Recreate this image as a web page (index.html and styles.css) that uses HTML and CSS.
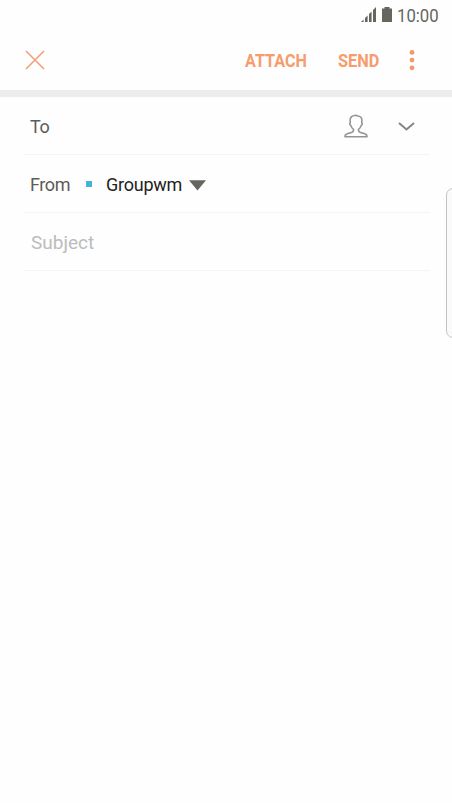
FILE: index.html
```html
<!DOCTYPE html>
<html lang="en">
<head>
    <meta charset="UTF-8">
    <meta name="viewport" content="width=device-width, initial-scale=1.0">
    <title>Compose</title>
    <link rel="stylesheet" href="styles.css">
</head>
<body>
    <div class="status-bar">
        <svg class="signal-icon" viewBox="0 0 16 16">
            <path d="M0 15L2.6 12.4V15ZM4 11L6.6 8.4V15H4ZM8 7L10.6 4.4V15H8ZM12 3L15 0V15H12Z"/>
        </svg>
        <svg class="battery-icon" viewBox="0 0 10 16">
            <path d="M2.5 0H7.5V1.5H10V15H0V1.5H2.5Z"/>
        </svg>
        <span class="clock"><span class="narrow">10:00</span></span>
    </div>

    <div class="toolbar">
        <svg class="close-icon" viewBox="0 0 20 20">
            <path d="M1 1L19 19M19 1L1 19"/>
        </svg>
        <div class="attach-btn"><span class="narrow">ATTACH</span></div>
        <div class="send-btn"><span class="narrow">SEND</span></div>
        <svg class="more-icon" viewBox="0 0 6 22">
            <circle cx="3" cy="3.4" r="2.4"/>
            <circle cx="3" cy="11.1" r="2.4"/>
            <circle cx="3" cy="18.8" r="2.4"/>
        </svg>
    </div>

    <div class="fields">
        <div class="row">
            <span class="label">To</span>
            <svg class="contact-icon" viewBox="0 0 24 24">
                <path d="M12 1.2C8.3 1.2 5.9 3.4 6.1 6.6L6.3 8.6C5.3 9.2 5.7 11.2 6.9 11.6C7.4 13.4 8.5 14.7 9.7 15.6C9.7 17.2 9.2 18 7.6 18.5L3.8 19.6C2 20.2 1 21.1 1 22.7H23C23 21.1 22 20.2 20.2 19.6L16.4 18.5C14.8 18 14.3 17.2 14.3 15.6C15.5 14.7 16.6 13.4 17.1 11.6C18.3 11.2 18.7 9.2 17.7 8.6L17.9 6.6C18.1 3.9 16.2 1.9 13.6 2Z"/>
            </svg>
            <svg class="chevron-icon" viewBox="0 0 17 10">
                <path d="M1 1.9L8.5 8.4L16 1.9"/>
            </svg>
        </div>
        <div class="row">
            <span class="label">From</span>
            <span class="account-color"></span>
            <span class="account">Groupwm</span>
            <svg class="dropdown-icon" viewBox="0 0 17 11">
                <path d="M0 .2H17L8.5 10.5Z"/>
            </svg>
        </div>
        <div class="row">
            <span class="subject">Subject</span>
        </div>
    </div>

    <div class="edge-panel"></div>
</body>
</html>
```

FILE: styles.css
```css
* {
    box-sizing: border-box;
}
body {
    margin: 0;
    height: 803px;
    position: relative;
    overflow: hidden;
    background-color: #fefefe;
    font-family: Roboto, sans-serif;
    font-size: 18px;
    color: #5c5c58;
}
svg {
    display: block;
    flex: none;
}
.status-bar {
    display: flex;
    justify-content: flex-end;
    align-items: center;
    height: 30px;
    padding-right: 14px;
}
.signal-icon {
    width: 16px;
    height: 16px;
    margin-right: 5px;
    fill: #666661;
}
.battery-icon {
    width: 10px;
    height: 16px;
    margin-right: 5px;
    fill: #666661;
}
.narrow {
    display: inline-block;
    transform-origin: left center;
    white-space: nowrap;
}
.clock {
    width: 41px;
    font-size: 19px;
    color: #666661;
}
.clock .narrow {
    transform: scaleX(0.88);
}
.toolbar {
    display: flex;
    align-items: center;
    height: 67px;
    padding: 0 37px 0 25px;
    border-bottom: 7px solid #ededed;
    color: #f79c6d;
    font-size: 19px;
    font-weight: 700;
}
.close-icon {
    width: 20px;
    height: 20px;
    margin-right: auto;
    fill: none;
    stroke: #f2a077;
    stroke-width: 1.6;
}
.attach-btn {
    width: 62px;
    margin-right: 30px;
}
.attach-btn .narrow {
    margin-left: -0.8px;
    transform: scaleX(0.85);
}
.send-btn {
    width: 42px;
    margin-right: 29px;
}
.send-btn .narrow {
    margin-left: -0.5px;
    transform: scaleX(0.86);
}
.more-icon {
    width: 6px;
    height: 22px;
    fill: #f2986c;
}
.fields {
    padding: 0 22px 0 24px;
}
.row {
    display: flex;
    align-items: center;
    height: 58px;
    padding: 1px 15px 0 6px;
    border-bottom: 1px solid #f4f4f4;
}
.label {
    letter-spacing: -0.4px;
}
.contact-icon {
    width: 24px;
    height: 24px;
    margin-left: auto;
    margin-right: 30px;
    fill: none;
    stroke: #949494;
    stroke-width: 1.6;
    stroke-linejoin: round;
}
.chevron-icon {
    width: 17px;
    height: 10px;
    fill: none;
    stroke: #858585;
    stroke-width: 2;
}
.account-color {
    width: 6px;
    height: 6px;
    margin-left: 16px;
    margin-right: 14px;
    background-color: #40b5d9;
}
.account {
    color: #222;
    letter-spacing: -0.25px;
}
.dropdown-icon {
    width: 17px;
    height: 11px;
    margin-top: 2px;
    margin-left: 7px;
    fill: #666661;
}
.subject {
    padding-left: 1px;
    font-size: 19px;
    color: #bcbcbc;
}
.edge-panel {
    position: absolute;
    top: 188px;
    right: -10px;
    width: 16px;
    height: 150px;
    border: 1px solid #c4c4c4;
    border-radius: 7px;
    background-color: #fafafa;
}
```
